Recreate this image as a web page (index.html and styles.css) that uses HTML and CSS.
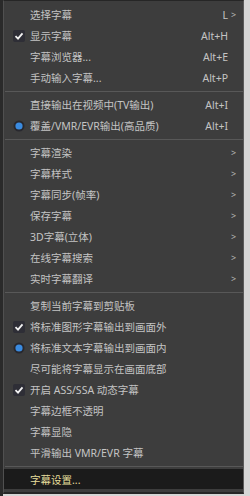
FILE: index.html
```html
<!DOCTYPE html>
<html lang="zh-CN">
<head>
    <meta charset="UTF-8">
    <meta name="viewport" content="width=device-width, initial-scale=1.0">
    <title>字幕菜单</title>
    <link rel="stylesheet" href="styles.css">
</head>
<body>
    <div class="screen">
        <ul class="menu">
            <li class="item"><span class="mark"></span><span class="label">选择字幕</span><span class="key">L</span><span class="arrow">&gt;</span></li>
            <li class="item">
                <span class="mark">
                    <svg width="16" height="16" viewBox="0 0 16 16"><rect x="2" y="2" width="12" height="12" rx="2" fill="#2e2e36"/><path d="M4.5 8.2 L7 10.6 L11.5 5.4" fill="none" stroke="#f2f2f2" stroke-width="1.8"/></svg>
                </span>
                <span class="label">显示字幕</span><span class="key">Alt+H</span><span class="arrow"></span>
            </li>
            <li class="item"><span class="mark"></span><span class="label">字幕浏览器...</span><span class="key">Alt+E</span><span class="arrow"></span></li>
            <li class="item"><span class="mark"></span><span class="label">手动输入字幕...</span><span class="key">Alt+P</span><span class="arrow"></span></li>
            <li class="sep"></li>
            <li class="item"><span class="mark"></span><span class="label">直接输出在视频中(TV输出)</span><span class="key">Alt+I</span><span class="arrow"></span></li>
            <li class="item">
                <span class="mark">
                    <svg width="16" height="16" viewBox="0 0 16 16"><circle cx="8" cy="8" r="5.5" fill="#28282e"/><circle cx="8" cy="8" r="3.6" fill="#3a8be0"/></svg>
                </span>
                <span class="label">覆盖/VMR/EVR输出(高品质)</span><span class="key">Alt+I</span><span class="arrow"></span>
            </li>
            <li class="sep"></li>
            <li class="item"><span class="mark"></span><span class="label">字幕渲染</span><span class="key"></span><span class="arrow">&gt;</span></li>
            <li class="item"><span class="mark"></span><span class="label">字幕样式</span><span class="key"></span><span class="arrow">&gt;</span></li>
            <li class="item"><span class="mark"></span><span class="label">字幕同步(帧率)</span><span class="key"></span><span class="arrow">&gt;</span></li>
            <li class="item"><span class="mark"></span><span class="label">保存字幕</span><span class="key"></span><span class="arrow">&gt;</span></li>
            <li class="item"><span class="mark"></span><span class="label">3D字幕(立体)</span><span class="key"></span><span class="arrow">&gt;</span></li>
            <li class="item"><span class="mark"></span><span class="label">在线字幕搜索</span><span class="key"></span><span class="arrow">&gt;</span></li>
            <li class="item"><span class="mark"></span><span class="label">实时字幕翻译</span><span class="key"></span><span class="arrow">&gt;</span></li>
            <li class="sep"></li>
            <li class="item"><span class="mark"></span><span class="label">复制当前字幕到剪贴板</span><span class="key"></span><span class="arrow"></span></li>
            <li class="item">
                <span class="mark">
                    <svg width="16" height="16" viewBox="0 0 16 16"><rect x="2" y="2" width="12" height="12" rx="2" fill="#2e2e36"/><path d="M4.5 8.2 L7 10.6 L11.5 5.4" fill="none" stroke="#f2f2f2" stroke-width="1.8"/></svg>
                </span>
                <span class="label">将标准图形字幕输出到画面外</span><span class="key"></span><span class="arrow"></span>
            </li>
            <li class="item">
                <span class="mark">
                    <svg width="16" height="16" viewBox="0 0 16 16"><circle cx="8" cy="8" r="5.5" fill="#28282e"/><circle cx="8" cy="8" r="3.6" fill="#3a8be0"/></svg>
                </span>
                <span class="label">将标准文本字幕输出到画面内</span><span class="key"></span><span class="arrow"></span>
            </li>
            <li class="item"><span class="mark"></span><span class="label">尽可能将字幕显示在画面底部</span><span class="key"></span><span class="arrow"></span></li>
            <li class="item">
                <span class="mark">
                    <svg width="16" height="16" viewBox="0 0 16 16"><rect x="2" y="2" width="12" height="12" rx="2" fill="#2e2e36"/><path d="M4.5 8.2 L7 10.6 L11.5 5.4" fill="none" stroke="#f2f2f2" stroke-width="1.8"/></svg>
                </span>
                <span class="label">开启 ASS/SSA 动态字幕</span><span class="key"></span><span class="arrow"></span>
            </li>
            <li class="item"><span class="mark"></span><span class="label">字幕边框不透明</span><span class="key"></span><span class="arrow"></span></li>
            <li class="item"><span class="mark"></span><span class="label">字幕显隐</span><span class="key"></span><span class="arrow"></span></li>
            <li class="item"><span class="mark"></span><span class="label">平滑输出 VMR/EVR 字幕</span><span class="key"></span><span class="arrow"></span></li>
            <li class="sep"></li>
            <li class="item active"><span class="mark"></span><span class="label">字幕设置...</span><span class="key"></span><span class="arrow"></span></li>
        </ul>
    </div>
</body>
</html>
```

FILE: styles.css
```css
body {
    margin: 0;
    background: #d6d6d6;
    font-family: "Noto Sans", "Noto Sans CJK SC", sans-serif;
}
.screen {
    width: 250px;
    height: 496px;
    display: flex;
    background: linear-gradient(to right, #2a2a2a 0, #2a2a2a 3px, transparent 3px), #d6d6d6;
}
.menu {
    list-style: none;
    margin: 0;
    padding: 3px 0 0 0;
    width: 239px;
    height: 488px;
    margin-left: 3px;
    background: #3d3d3d;
    border-top: 1px solid #262626;
    border-left: 1px solid #505050;
    border-right: 1px solid #5a5a5a;
    border-bottom: 2px solid #262626;
}
.item {
    display: grid;
    grid-template-columns: 26px 1fr auto 15px;
    align-items: center;
    height: 21px;
    font-size: 10.5px;
    color: #c4c4c4;
}
.mark {
    display: flex;
    justify-content: center;
    align-items: center;
    padding-left: 4px;
}
.mark svg {
    display: block;
}
.label {
    white-space: nowrap;
}
.key {
    text-align: right;
}
.arrow {
    font-size: 9px;
    padding-left: 3px;
    color: #b8b8b8;
}
.sep {
    height: 0;
    margin: 3px 0 2px 1px;
    border-top: 1px solid #585858;
}
.item.active {
    background: #1b1b1b;
    color: #e6de9c;
    height: 20px;
}
```
